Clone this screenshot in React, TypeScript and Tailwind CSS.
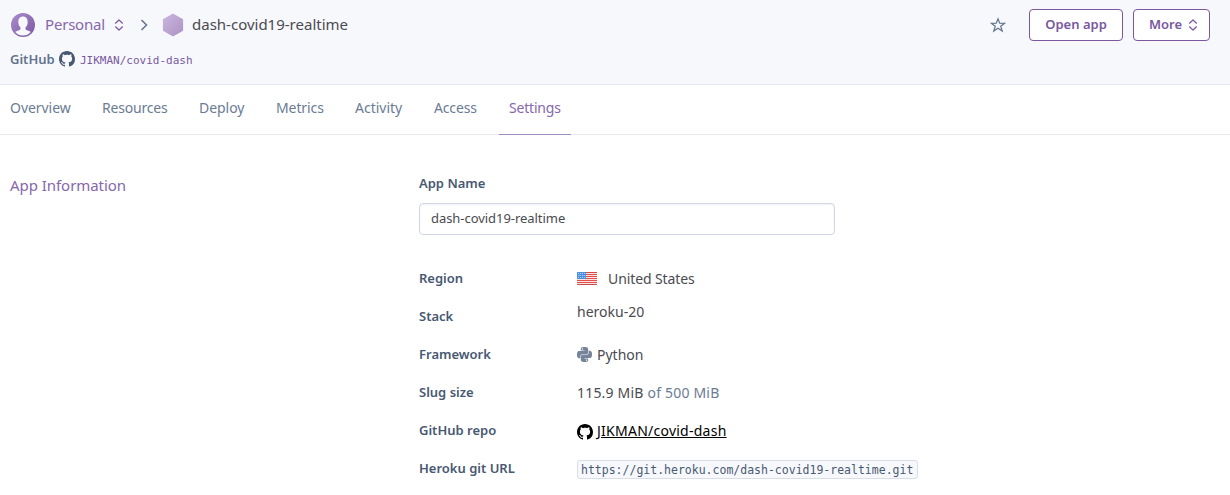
import React from "react";

const OCTOCAT =
  "M8 0C3.58 0 0 3.58 0 8c0 3.54 2.29 6.53 5.47 7.59.4.07.55-.17.55-.38 0-.19-.01-.82-.01-1.49-2.01.37-2.53-.49-2.69-.94-.09-.23-.48-.94-.82-1.13-.28-.15-.68-.52-.01-.53.63-.01 1.08.58 1.23.82.72 1.21 1.87.87 2.33.66.07-.52.28-.87.51-1.07-1.78-.2-3.64-.89-3.64-3.95 0-.87.31-1.59.82-2.15-.08-.2-.36-1.02.08-2.12 0 0 .67-.21 2.2.82.64-.18 1.32-.27 2-.27s1.36.09 2 .27c1.53-1.04 2.2-.82 2.2-.82.44 1.1.16 1.92.08 2.12.51.56.82 1.27.82 2.15 0 3.07-1.87 3.75-3.65 3.95.29.25.54.73.54 1.48 0 1.07-.01 1.93-.01 2.2 0 .21.15.46.55.38A8.01 8.01 0 0 0 16 8c0-4.42-3.58-8-8-8z";

function GitHubMark({ className }: { className: string }) {
  return (
    <svg viewBox="0 0 16 16" className={className} fill="currentColor">
      <path d={OCTOCAT} />
    </svg>
  );
}

function Sorter({ className }: { className: string }) {
  return (
    <svg viewBox="0 0 10 12" className={className} fill="none" stroke="currentColor" strokeWidth="1.2" strokeLinecap="round" strokeLinejoin="round">
      <path d="M1.5 4.2 5 1l3.500 3.200M1.500 7.800 5 11l3.500-3.200" />
    </svg>
  );
}

function Avatar() {
  return (
    <svg viewBox="0 0 24 24" className="h-6 w-6 shrink-0">
      <defs>
        <linearGradient id="avatar" x1="0" y1="0" x2="1" y2="1">
          <stop offset="0" stopColor="#ab8ccf" />
          <stop offset="1" stopColor="#79589f" />
        </linearGradient>
      </defs>
      <circle cx="12" cy="12" r="12" fill="url(#avatar)" />
      <path
        fill="#f7f8fc"
        d="M12 3.600c-2.900 0-4.700 2.200-4.700 5.400 0 2.300.9 4.300 2.200 5.400.3 1.600-.3 2.500-2.100 3.100-1.300.4-2.600.8-3.200 1.500A10.600 10.600 0 0 0 12 22.600a10.600 10.600 0 0 0 7.800-3.600c-.6-.7-1.900-1.100-3.200-1.500-1.800-.6-2.400-1.500-2.100-3.100 1.300-1.100 2.200-3.100 2.200-5.400 0-3.200-1.800-5.400-4.700-5.400z"
      />
    </svg>
  );
}

function Hexagon() {
  return (
    <svg viewBox="0 0 22 24" className="h-6 w-[22px] shrink-0">
      <defs>
        <linearGradient id="hex" x1="0" y1="0" x2="1" y2="1">
          <stop offset="0" stopColor="#c9b6de" />
          <stop offset="1" stopColor="#ad94c4" />
        </linearGradient>
      </defs>
      <path d="M11 1.500 20.300 6.700v10.600L11 22.500 1.700 17.300V6.700z" fill="url(#hex)" stroke="url(#hex)" strokeWidth="1.600" strokeLinejoin="round" />
    </svg>
  );
}

function Flag() {
  return (
    <svg viewBox="0 0 20 13" className="mb-px h-[13px] w-5 shrink-0">
      <rect width="20" height="13" rx="1" fill="#fbe3e2" />
      {[0, 2, 4, 6, 8, 10, 12].map((y) => (
        <rect key={y} y={y} width="20" height="1" rx={y === 0 || y === 12 ? 0.5 : 0} fill={y === 0 || y === 12 ? "#c94a47" : "#e2504c"} />
      ))}
      <rect width="9" height="7" fill="#4b91e0" />
      {[1, 3, 5].map((y) =>
        [1, 3, 5, 7].map((x) => (
          <circle key={`${x}-${y}`} cx={x + (y === 3 ? 0.9 : 0.4)} cy={y + 0.5} r="0.500" fill="#d5e6fa" />
        ))
      )}
    </svg>
  );
}

function PythonMark() {
  return (
    <svg viewBox="0 0 24 24" className="mb-px h-[15px] w-[15px] shrink-0" fill="#76839b">
      <path d="M14.250.18l.9.200.730.260.590.300.450.320.340.340.250.340.160.330.100.300.040.260.020.200-.010.130V8.500l-.050.630-.130.550-.210.460-.260.380-.300.310-.330.250-.350.190-.350.140-.330.100-.300.070-.260.040-.210.020H8.770l-.690.050-.590.140-.500.220-.410.270-.330.320-.270.350-.200.360-.150.370-.100.350-.070.320-.040.270-.020.210v3.060H3.170l-.210-.030-.280-.070-.320-.120-.350-.180-.360-.260-.360-.360-.350-.460-.320-.590-.280-.730-.210-.880-.140-1.050-.050-1.230.060-1.220.160-1.040.240-.870.320-.710.360-.570.400-.440.420-.330.420-.240.400-.160.360-.100.320-.050.240-.010h.160l.060.010h8.160v-.830H6.180l-.010-2.750-.020-.370.050-.340.110-.310.170-.280.250-.260.310-.230.380-.200.440-.180.510-.150.580-.120.640-.100.710-.060.770-.040.840-.020 1.270.050zm-6.300 1.980l-.230.330-.080.410.080.410.230.340.330.220.410.090.410-.090.330-.220.230-.340.080-.410-.080-.410-.230-.330-.330-.220-.410-.090-.410.090zm13.090 3.950l.280.060.320.120.350.180.360.270.360.350.350.470.320.590.280.730.210.880.140 1.040.050 1.230-.060 1.230-.160 1.040-.240.860-.320.710-.360.570-.400.450-.420.330-.420.240-.400.160-.360.090-.320.050-.240.020-.160-.010h-8.220v.820h5.840l.010 2.760.020.360-.050.340-.110.310-.170.290-.250.250-.310.240-.380.200-.440.170-.510.150-.580.130-.640.090-.710.070-.770.040-.840.010-1.270-.040-1.070-.140-.900-.200-.730-.250-.590-.300-.450-.330-.340-.340-.250-.340-.160-.330-.100-.300-.040-.250-.020-.200.010-.130v-5.340l.050-.640.130-.540.210-.460.260-.380.300-.320.330-.240.350-.200.350-.140.330-.100.300-.060.260-.040.210-.020.130-.010h5.840l.690-.050.590-.140.500-.210.410-.280.330-.320.270-.350.200-.360.150-.360.100-.350.070-.320.040-.280.020-.210V6.070h2.090l.140.010zm-6.470 14.250l-.230.330-.080.410.080.410.230.330.330.230.410.080.410-.080.330-.230.230-.330.080-.410-.080-.410-.230-.330-.330-.230-.410-.080-.410.080z" />
    </svg>
  );
}

const TABS = [
  { label: "Overview", box: "w-[92px] tracking-[-0.05px]" },
  { label: "Resources", box: "w-[97px] tracking-[-0.2px]" },
  { label: "Deploy", box: "w-[77px] tracking-[-0.05px]" },
  { label: "Metrics", box: "w-[79px] tracking-[-0.1px]" },
  { label: "Activity", box: "w-[79px]" },
  { label: "Access", box: "w-[75px] tracking-[-0.15px]" },
];

function Row({ label, children }: { label: string; children: React.ReactNode }) {
  return (
    <div className="flex h-[38px] items-center">
      <div className="w-[158px] text-[13px] font-semibold text-[#475872]">{label}</div>
      {children}
    </div>
  );
}

export default function App() {
  return (
    <div className="h-[495px] w-[1230px] overflow-hidden bg-white font-['Noto_Sans','Open_Sans',sans-serif] text-[14px] whitespace-nowrap text-[#4a4a50]">
      <header className="flex h-[85px] flex-col border-b border-[#e3e8f1] bg-[#f7f8fc] pr-5 pl-[10px]">
        <div className="flex h-[50px] items-center">
          <div className="flex flex-1 items-center pl-[1px]">
            <Avatar />
            <span className="ml-[10px] w-[69px] pb-0.5 text-[15px] tracking-[-0.2px] text-[#8667aa]">Personal</span>
            <Sorter className="h-3 w-[10px] text-[#79589f]" />
            <svg viewBox="0 0 8 12" className="ml-[16px] h-3 w-2" fill="none" stroke="#62738d" strokeWidth="1.500">
              <path d="m1.500 1 5 5-5 5" />
            </svg>
            <div className="ml-[14px] flex items-center">
              <Hexagon />
              <span className="ml-2 pb-0.5 text-[15px]">dash-covid19-realtime</span>
            </div>
          </div>
          <svg viewBox="0 0 16 16" className="mr-[23px] h-4 w-4" fill="none" stroke="#62738d" strokeWidth="1.200">
            <path d="m8 1.800 1.700 4.400 4.900.1-3.900 3 1.500 4.700L8 11.200 3.800 14l1.500-4.700-3.900-3 4.900-.1z" />
          </svg>
          <button className="flex h-8 w-[94px] items-center justify-center rounded-[4px] border border-[#79589f] bg-white text-[13px] font-semibold text-[#79589f]">
            Open app
          </button>
          <button className="ml-[10px] flex h-8 w-[77px] items-center rounded-[4px] border border-[#79589f] bg-white pl-[15px] text-[13px] font-semibold text-[#79589f]">
            <span className="w-[39px] text-left">More</span>
            <Sorter className="h-3 w-[10px]" />
          </button>
        </div>
        <div className="flex h-[18px] items-center text-[13px]">
          <span className="w-[49px] pt-0.5 font-semibold text-[#62738d]">GitHub</span>
          <GitHubMark className="h-4 w-4 text-[#475872]" />
          <span className="ml-[5px] pt-[4px] font-['DejaVu_Sans_Mono',monospace] text-[11px] text-[#79589f]">JIKMAN/covid-dash</span>
        </div>
      </header>

      <nav className="flex h-[50px] border-b border-[#e3e8f1] text-[#6b7b94]">
        {TABS.map((tab) => (
          <a key={tab.label} className={`${tab.box} h-[46px] pl-[10px] leading-[46px]`}>
            {tab.label}
          </a>
        ))}
        <a className="h-[50px] w-[72px] border-b border-[#a58bc4] pl-[10px] leading-[46px] tracking-[-0.2px] text-[#8667aa]">Settings</a>
      </nav>

      <main className="flex pl-[10px]">
        <h2 className="w-[409px] pt-[38px] text-[15px] leading-6 tracking-[-0.05px] text-[#8667aa]">App Information</h2>
        <section className="w-[600px] pt-[37px]">
          <div className="text-[13px] leading-[22px] font-semibold text-[#475872]">App Name</div>
          <div className="mt-[9px] flex h-8 w-[416px] items-center rounded-[4px] border border-[#cfd7e6] px-[11px] pb-px text-[13px] tracking-[-0.05px] shadow-[inset_0_1px_2px_#f0f0f4]">
            dash-covid19-realtime
          </div>
          <div className="mt-[25px]">
            <Row label="Region">
              <Flag />
              <span className="ml-[11px] pb-px tracking-[-0.1px]">United States</span>
            </Row>
            <Row label="Stack">
              <span className="pb-[11px]">heroku-20</span>
            </Row>
            <Row label="Framework">
              <PythonMark />
              <span className="ml-[5px] pb-px">Python</span>
            </Row>
            <Row label="Slug size">
              <span className="pb-px tracking-[0.2px]">
                115.9 MiB <span className="text-[#6b7b94]">of 500 MiB</span>
              </span>
            </Row>
            <Row label="GitHub repo">
              <GitHubMark className="mt-px h-4 w-4 text-black" />
              <a className="ml-1 pb-px tracking-[0.25px] text-black underline">JIKMAN/covid-dash</a>
            </Row>
            <Row label="Heroku git URL">
              <code className="mt-px flex h-[19px] w-[341px] items-center rounded-[3px] border border-[#d8dde6] bg-[#f7f8fc] pt-0.5 pl-[3px] font-['DejaVu_Sans_Mono',monospace] text-[11.5px] text-[#475872]">
                https://git.heroku.com/dash-covid19-realtime.git
              </code>
            </Row>
          </div>
        </section>
      </main>
    </div>
  );
}
